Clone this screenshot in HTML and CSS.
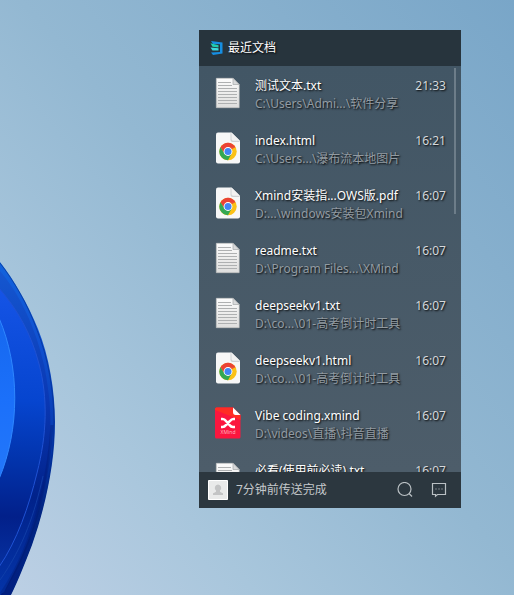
FILE: index.html
```html
<!DOCTYPE html>
<html lang="zh-CN">
<head>
<meta charset="utf-8">
<meta name="viewport" content="width=device-width, initial-scale=1">
<title>最近文档</title>
<link rel="stylesheet" href="styles.css">
</head>
<body>
<svg class="bloom" viewBox="0 260 56 335" aria-hidden="true">
  <defs>
    <linearGradient id="rim" x1="0" y1="262" x2="0" y2="595" gradientUnits="userSpaceOnUse">
      <stop offset="0" stop-color="#1263dd"/><stop offset=".25" stop-color="#1050d0"/><stop offset=".55" stop-color="#0638ad"/><stop offset=".75" stop-color="#022482"/><stop offset="1" stop-color="#011f80"/>
    </linearGradient>
    <linearGradient id="fold" x1="0" y1="270" x2="0" y2="595" gradientUnits="userSpaceOnUse">
      <stop offset="0" stop-color="#1557d0"/><stop offset=".4" stop-color="#0a38b4"/><stop offset=".7" stop-color="#01228a"/><stop offset="1" stop-color="#0434a8"/>
    </linearGradient>
    <linearGradient id="petal" x1="10" y1="290" x2="0" y2="566" gradientUnits="userSpaceOnUse">
      <stop offset="0" stop-color="#1554e6"/><stop offset=".4" stop-color="#0645cf"/><stop offset=".62" stop-color="#0233ab"/><stop offset=".82" stop-color="#02208a"/><stop offset="1" stop-color="#06309f"/>
    </linearGradient>
    <linearGradient id="core" x1="0" y1="320" x2="0" y2="478" gradientUnits="userSpaceOnUse">
      <stop offset="0" stop-color="#1668ef"/><stop offset=".5" stop-color="#1b70fa"/><stop offset="1" stop-color="#2377fa"/>
    </linearGradient>
  </defs>
  <path fill="url(#rim)" d="M0 262C14 280 28 304 38 329C49 356 55 391 55 422C55 462 46 505 32 545C25 563 18 581 11 595H0Z"/>
  <path fill="none" stroke="#002a84" stroke-opacity=".55" d="M0 263C14 281 28 305 37 330C48 357 54 391 54 422C54 462 45 505 31 545C24 563 17 581 10 595"/>
  <path fill="url(#fold)" d="M0 271C20 294 36 329 44 365C51 399 53 430 47 472C41 509 27 548 12 576L4 592L0 595Z"/>
  <path fill="none" stroke="#001869" stroke-width="3" stroke-opacity=".3" d="M52 425C49 475 37 520 24 551C17 568 9 582 1 594"/>
  <path fill="none" stroke="#1544ad" stroke-opacity=".7" d="M43 476C35 512 24 546 0 580"/>
  <path fill="url(#petal)" stroke="#1f52d4" d="M-1 288C17 309 31 333 39 364C48 398 47 434 37 473C29 506 17 541 -1 567Z"/>
  <path fill="url(#core)" stroke="#2e87ff" stroke-width="1" d="M-1 318C20 367 20 429 -1 479Z"/>
</svg>

<svg class="sprites" aria-hidden="true">
  <defs>
    <linearGradient id="paper" x1="0" y1="0" x2="0" y2="1"><stop offset="0" stop-color="#fcfcfc"/><stop offset="1" stop-color="#dededd"/></linearGradient>
    <symbol id="file-text" viewBox="0 0 26 32">
      <path fill="url(#paper)" stroke="#c1c1bf" stroke-width=".6" d="M1.300 1.300H18l6.200 6.200v23.200H1.300Z"/>
      <path fill="#d9dadb" stroke="#a4a7a9" stroke-width=".7" d="M18 1.300v6.200h6.200Z"/>
      <path stroke="#aeb0b1" stroke-width="1" d="M3 5.500h13M3 8.500h14M3 11.500h19M3 14.500h19M3 17.500h19M3 20.500h19M3 23.500h19M3 26.500h19"/>
    </symbol>
    <symbol id="file-chrome" viewBox="0 0 26 32">
      <path fill="#f7f7f7" d="M3 .5h13.500L25 9v20.500q0 2-2 2H3q-2 0-2-2v-27q0-2 2-2Z"/>
      <path fill="#cfd2d4" d="M15.500 .5v7.500q0 2 2 2H25Z"/>
      <path fill="#f2f2f2" d="M16.500 .5v6.500q0 1.700 1.700 1.700H25Z"/>
      <circle cx="13" cy="19.500" r="8.700" fill="#fbc116"/>
      <path fill="#ea4335" d="M5.470 15.150A8.700 8.700 0 0 1 20.530 15.150L13 15.500L9.300 21.500Z"/>
      <path fill="#34a853" d="M5.470 15.150A8.700 8.700 0 0 0 13 28.200L16.700 21.500L9.500 21.500Z"/>
      <path fill="#ea4335" d="M13 15.150H20.530L17 17Z"/>
      <circle cx="13" cy="19.500" r="4.400" fill="#fff"/>
      <circle cx="13" cy="19.500" r="3.500" fill="#4285f4"/>
    </symbol>
    <symbol id="file-xmind" viewBox="0 0 26 32">
      <path fill="#fb163f" d="M1.500 .5H18L25.500 8v22q0 1.500-1.500 1.500H1.500Q0 31.500 0 30V2Q0 .5 1.500 .5Z"/>
      <path fill="#ff2d24" d="M1.500 .5H18L25.500 8v5L0 3V2Q0 .5 1.500 .5Z"/>
      <path fill="#fff" d="M18 .5L25.500 8h-5Q18 8 18 5Z"/>
      <path fill="none" stroke="#fff" stroke-width="2.600" d="M6 12h1.500q2 0 3.500 2l3.500 4q1.500 2 3.500 2h2M20 12h-1.500q-2 0-3.500 2l-4 4q-1.500 2-3.500 2H6"/>
      <text class="badge-name" x="13" y="27" text-anchor="middle">XMind</text>
    </symbol>
  </defs>
</svg>

<main class="widget">
  <header class="widget-head">
    <svg class="logo" viewBox="0 0 13 14" aria-hidden="true">
      <path fill="#168ee2" d="M1 0L12.500 1.500V12.500L3 14L1 11.500L10 11V3.300L3 3Z"/>
      <path fill="#20cfb1" d="M.5 2.300L8.500 4.200V6.500L2.500 5.800Z"/>
      <path fill="#3bdcde" d="M.5 6.500L8.500 7.300V9.600L2.500 9.500Z"/>
    </svg>
    <h1>最近文档</h1>
  </header>

  <section class="files" aria-label="最近文档">
    <ul>
      <li><svg class="file-icon"><use href="#file-text"/></svg><div class="info"><a href="#">测试文本.txt</a><p>C:\Users\Admi...\软件分享</p></div><time>21:33</time></li>
      <li><svg class="file-icon"><use href="#file-chrome"/></svg><div class="info"><a href="#">index.html</a><p>C:\Users...\瀑布流本地图片</p></div><time>16:21</time></li>
      <li><svg class="file-icon"><use href="#file-chrome"/></svg><div class="info"><a href="#">Xmind安装指...OWS版.pdf</a><p>D:...\windows安装包Xmind</p></div><time>16:07</time></li>
      <li><svg class="file-icon"><use href="#file-text"/></svg><div class="info"><a href="#">readme.txt</a><p>D:\Program Files...\XMind</p></div><time>16:07</time></li>
      <li><svg class="file-icon"><use href="#file-text"/></svg><div class="info"><a href="#">deepseekv1.txt</a><p>D:\co...\01-高考倒计时工具</p></div><time>16:07</time></li>
      <li><svg class="file-icon"><use href="#file-chrome"/></svg><div class="info"><a href="#">deepseekv1.html</a><p>D:\co...\01-高考倒计时工具</p></div><time>16:07</time></li>
      <li><svg class="file-icon"><use href="#file-xmind"/></svg><div class="info"><a href="#">Vibe coding.xmind</a><p>D:\videos\直播\抖音直播</p></div><time>16:07</time></li>
      <li><svg class="file-icon"><use href="#file-text"/></svg><div class="info"><a href="#">必看(使用前必读).txt</a></div><time>16:07</time></li>
    </ul>
    <span class="thumb"></span>
  </section>

  <footer class="widget-foot">
    <svg class="avatar" viewBox="0 0 20 20" aria-hidden="true">
      <path fill="#e9eaea" stroke="#fff" d="M.5 .5h19v19H.5Z"/>
      <path fill="#c3c4c5" d="M10 4.500a3.400 3.400 0 0 1 2 6q-.5 1.500 1.200 2l1.800.8V15H5v-1.700l1.800-.8q1.700-.5 1.200-2a3.400 3.400 0 0 1 2-6Z"/>
    </svg>
    <p class="status">7分钟前传送完成</p>
    <button type="button" aria-label="搜索"><svg viewBox="0 0 16 16"><circle cx="7.500" cy="7" r="6.500"/><path d="M12 11.500l3 3"/></svg></button>
    <button type="button" aria-label="消息"><svg viewBox="0 0 16 16"><path d="M1.500 1.500h13v11H6.500l-2 1.700v-1.700h-3Z"/><path class="dots" d="M4.500 7h1M7.500 7h1M10.500 7h1"/></svg></button>
  </footer>
</main>
</body>
</html>
```
FILE: styles.css
```css
* {
  box-sizing: border-box;
}

body {
  position: relative;
  display: flex;
  height: 100vh;
  margin: 0;
  padding: 30px 53px 87px 199px;
  overflow: hidden;
  background: linear-gradient(to top right, #bdd0e5 0%, #a8c6dc 25%, #93b8d2 52%, #79a6c8 100%);
  color: #fff;
  font: 12px/18px "Noto Sans", "Noto Sans CJK SC", sans-serif;
}

.bloom {
  position: absolute;
  left: 0;
  bottom: 0;
  width: 56px;
  height: 335px;
}

.sprites {
  position: absolute;
  width: 0;
  height: 0;
}

.widget {
  display: flex;
  flex: 1;
  flex-direction: column;
  min-width: 0;
}

.widget-head {
  display: flex;
  flex: none;
  align-items: center;
  gap: 5px;
  height: 36px;
  padding: 0 11px;
  background: #27343d;
}

.logo {
  width: 13px;
  height: 14px;
}

h1 {
  margin: 0;
  font-size: 12px;
  font-weight: 400;
  text-shadow: 1px 1px 2px #000;
}

.files {
  position: relative;
  flex: 1;
  min-height: 0;
  overflow: hidden;
  background: linear-gradient(#425665, #4d5d6a);
}

ul {
  margin: 0;
  padding: 0;
  list-style: none;
}

li {
  display: flex;
  height: 55px;
  padding: 11px 15px 8px 16px;
  text-shadow: 1px 1px 2px #000;
}

.file-icon {
  flex: none;
  width: 26px;
  height: 32px;
}

.badge-name {
  fill: #ffb3bf;
  font-size: 5px;
  text-shadow: none;
}

.info {
  flex: 1;
  min-width: 0;
  padding-left: 14px;
  white-space: nowrap;
}

.info a {
  display: block;
  color: #fff;
  text-decoration: none;
}

.info p {
  margin: 0;
  color: #929ba2;
}

time {
  color: #d5d9dc;
}

.thumb {
  position: absolute;
  top: 2px;
  right: 5px;
  width: 2px;
  height: 36%;
  background: #6d7d89;
}

.widget-foot {
  display: flex;
  flex: none;
  align-items: center;
  height: 36px;
  padding: 0 14px 0 9px;
  background: #2c373f;
}

.avatar {
  width: 20px;
  height: 20px;
}

.status {
  flex: 1;
  margin: 0 0 0 8px;
  color: #c4c8cb;
}

button {
  display: flex;
  margin: 0 0 0 18px;
  padding: 0;
  border: 0;
  background: none;
}

button svg {
  width: 16px;
  height: 16px;
  fill: none;
  stroke: #bac0c4;
  stroke-width: 1.2;
}
```
